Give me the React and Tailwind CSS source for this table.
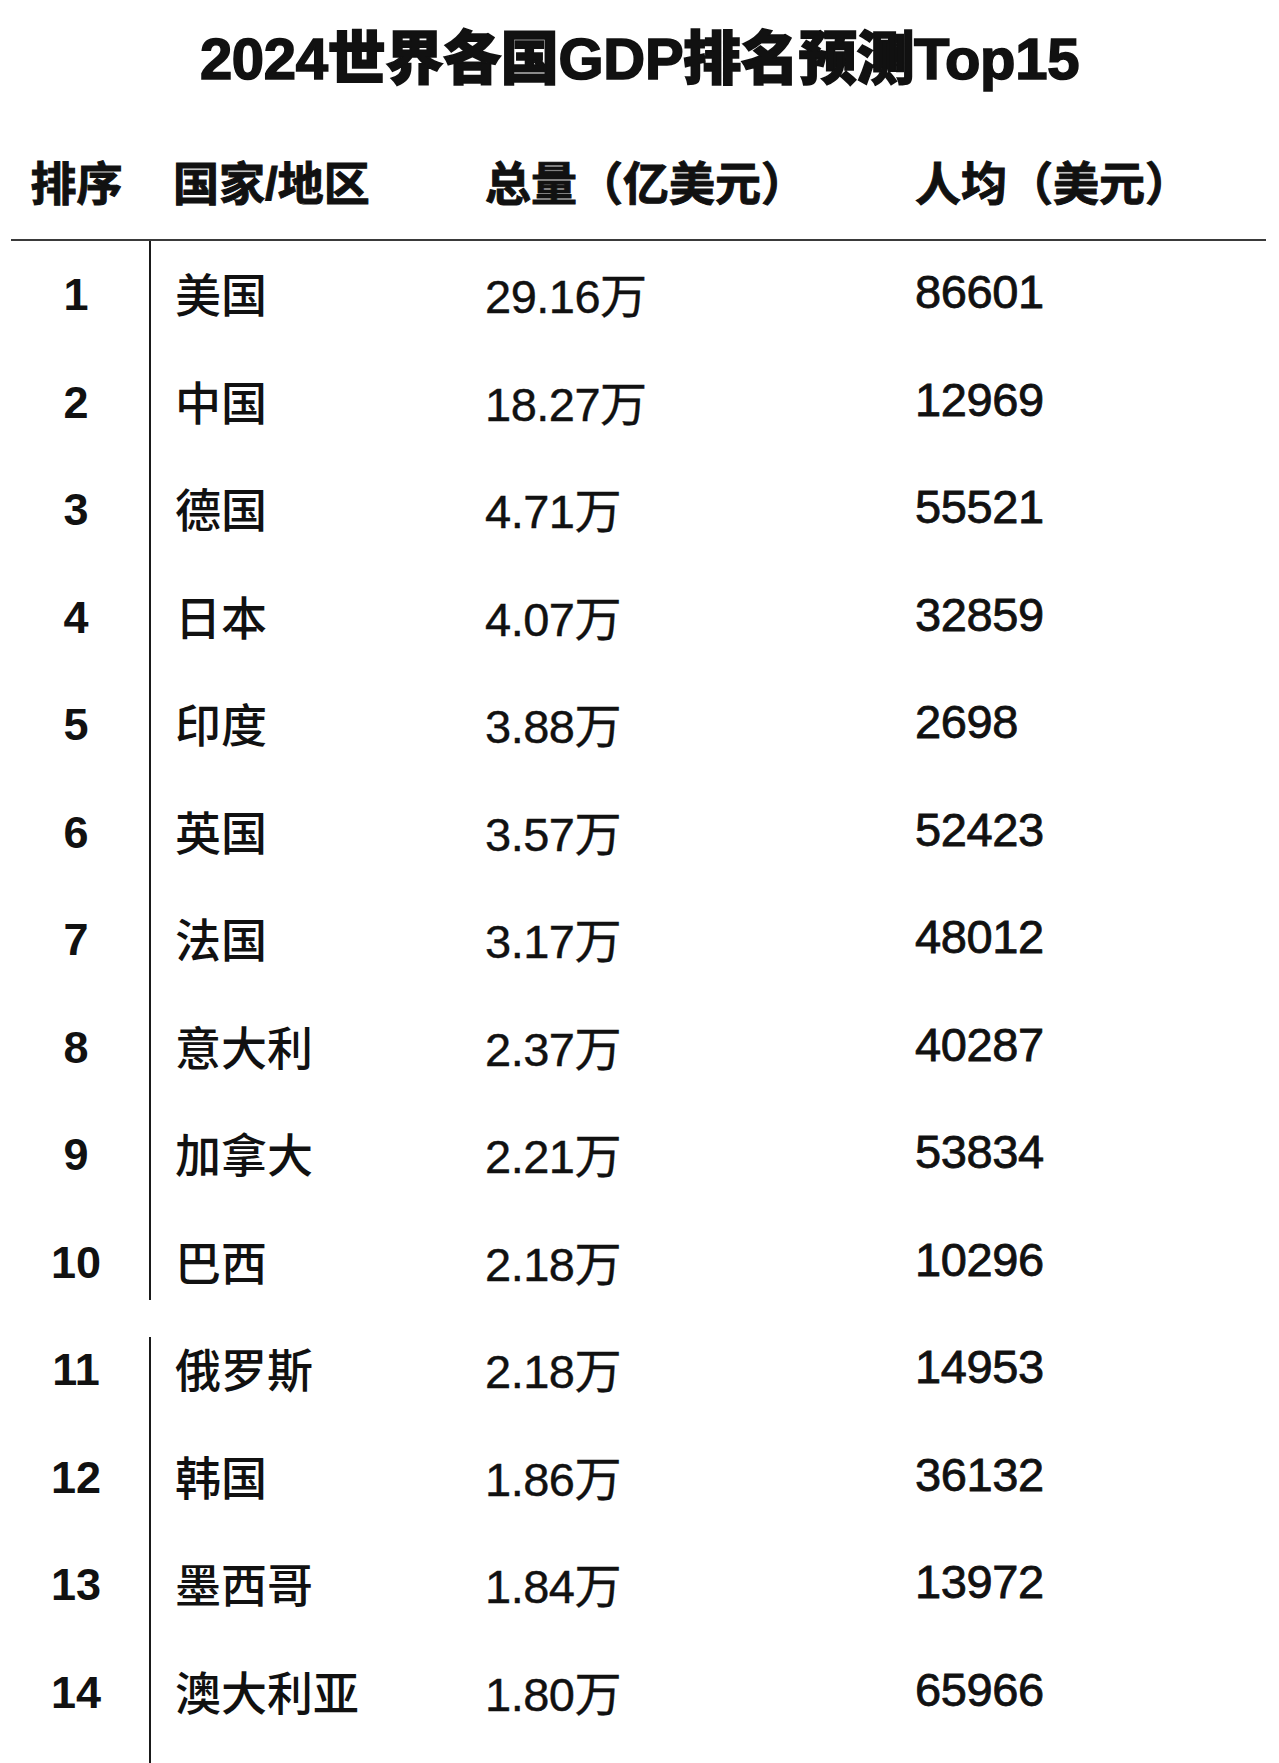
import React from "react";

const rows = [
  ["1", "美国", "29.16万", "86601"],
  ["2", "中国", "18.27万", "12969"],
  ["3", "德国", "4.71万", "55521"],
  ["4", "日本", "4.07万", "32859"],
  ["5", "印度", "3.88万", "2698"],
  ["6", "英国", "3.57万", "52423"],
  ["7", "法国", "3.17万", "48012"],
  ["8", "意大利", "2.37万", "40287"],
  ["9", "加拿大", "2.21万", "53834"],
  ["10", "巴西", "2.18万", "10296"],
  ["11", "俄罗斯", "2.18万", "14953"],
  ["12", "韩国", "1.86万", "36132"],
  ["13", "墨西哥", "1.84万", "13972"],
  ["14", "澳大利亚", "1.80万", "65966"],
];

const font = {
  fontFamily:
    '"Liberation Sans", "Noto Sans CJK SC", sans-serif',
};

function Divider({ idx }) {
  if (idx === 9) {
    return <div className="self-start h-[91px] w-[2px] bg-[#1a1a1a]" />;
  }
  if (idx === 10) {
    return <div className="self-end h-[87px] w-[2px] bg-[#1a1a1a]" />;
  }
  return <div className="self-stretch w-[2px] bg-[#1a1a1a]" />;
}

export default function App() {
  return (
    <div
      className="w-[1279px] h-[1763px] bg-white overflow-hidden text-[#111]"
      style={font}
    >
      <h1 className="h-[118px] flex items-center justify-center text-[58px] font-black tracking-[-0.3px] leading-none [-webkit-text-stroke:1.6px_#111]">
        2024世界各国GDP排名预测Top15
      </h1>

      <div className="h-[121px] pt-[10px] grid grid-cols-[149px_2px_334px_430px_1fr] items-center text-[46px] font-bold leading-none [-webkit-text-stroke:1px_#111]">
        <div className="text-center pl-[4px]">排序</div>
        <div />
        <div className="pl-[22px]">国家/地区</div>
        <div>总量（亿美元）</div>
        <div>人均（美元）</div>
      </div>

      <div className="h-[2px] ml-[11px] mr-[13px] bg-[#3a3a3a]" />

      <div className="flex flex-col">
        {rows.map((r, i) => (
          <div
            key={r[0]}
            className="h-[107.5px] grid grid-cols-[149px_2px_334px_430px_1fr] items-center leading-none"
          >
            <div className="text-center pl-[3px] text-[45px] font-bold">{r[0]}</div>
            <Divider idx={i} />
            <div className="pl-[24px] pt-[3px] text-[46px] font-medium">
              {r[1]}
            </div>
            <div className="pt-[4px] text-[47px] tracking-[-0.5px] [-webkit-text-stroke:0.4px_#111]">
              {r[2]}
            </div>
            <div className="pb-[6px] text-[47px] tracking-[-0.4px] [-webkit-text-stroke:0.8px_#111]">
              {r[3]}
            </div>
          </div>
        ))}
        <div className="h-[30px] grid grid-cols-[149px_2px_1fr]">
          <div />
          <div className="w-[2px] bg-[#1a1a1a]" />
          <div />
        </div>
      </div>
    </div>
  );
}
